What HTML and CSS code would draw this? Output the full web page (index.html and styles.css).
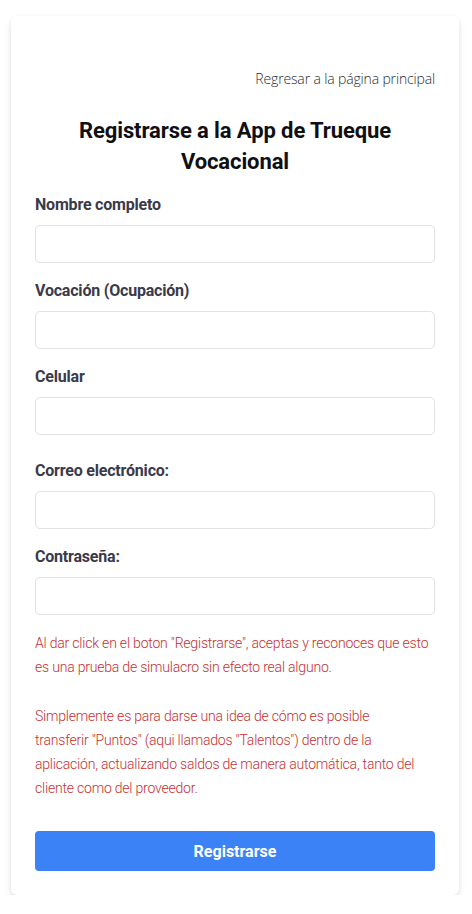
FILE: index.html
```html
<!DOCTYPE html>
<html lang="es">
<head>
<meta charset="utf-8">
<title>Registrarse</title>
<link rel="stylesheet" href="styles.css">
</head>
<body>
<main class="card">
  <div class="back-row">
    <a class="back-link" href="#">Regresar a la página principal</a>
  </div>
  <h1 class="title">Registrarse a la App de Trueque Vocacional</h1>
  <form class="form">
    <div class="field">
      <label class="label">Nombre completo</label>
      <input class="input" type="text">
    </div>
    <div class="field">
      <label class="label">Vocación (Ocupación)</label>
      <input class="input" type="text">
    </div>
    <div class="field">
      <label class="label">Celular</label>
      <input class="input" type="text">
    </div>
    <div class="field field-spaced">
      <label class="label">Correo electrónico:</label>
      <input class="input" type="email">
    </div>
    <div class="field">
      <label class="label">Contraseña:</label>
      <input class="input" type="password">
    </div>
    <div class="notice">
      <p>Al dar click en el boton "Registrarse", aceptas y reconoces que esto es una prueba de simulacro sin efecto real alguno.</p>
      <p>Simplemente es para darse una idea de cómo es posible<br>transferir "Puntos" (aqui llamados "Talentos") dentro de la aplicación, actualizando saldos de manera automática, tanto del<br>cliente como del proveedor.</p>
    </div>
    <button class="button" type="button">Registrarse</button>
  </form>
</main>
</body>
</html>
```
FILE: styles.css
```css
* { box-sizing: border-box; }
html, body { margin: 0; padding: 0; background: #fff; }
body {
  font-family: Roboto, "Liberation Sans", sans-serif;
  color: #1f2937;
}
.card {
  width: 448px;
  margin: 16px 0 0 11px;
  padding: 24px 24px 24px;
  background: #fff;
  border-radius: 6px;
  box-shadow: 0 4px 8px -1px rgba(0,0,0,0.12), 0 1px 4px rgba(0,0,0,0.05);
}
.back-row {
  display: flex;
  justify-content: flex-end;
  margin-top: 27px;
}
.back-link {
  font-family: "Open Sans", sans-serif;
  font-weight: 300;
  font-size: 14px;
  line-height: 24px;
  letter-spacing: -0.15px;
  color: #2d2d2d;
  text-decoration: none;
}
.title {
  margin: 24px 30px 18px;
  text-align: center;
  font-size: 22px;
  line-height: 31px;
  font-weight: 700;
  color: #0f0f14;
  letter-spacing: -0.1px;
}
.form { display: flex; flex-direction: column; }
.field { display: flex; flex-direction: column; margin-bottom: 18px; }
.field-spaced { margin-top: 8px; }
.label {
  font-size: 16px;
  line-height: 20px;
  font-weight: 700;
  color: #3a3a4a;
  margin-bottom: 10px;
  letter-spacing: -0.2px;
}
.input {
  height: 38px;
  border: 1px solid #e2e2e6;
  border-radius: 5px;
  padding: 0 12px;
  font: inherit;
  background: #fff;
}
.notice {
  margin-top: -2px;
  color: #c53030;
  font-size: 14px;
  line-height: 24px;
  font-weight: 300;
  letter-spacing: -0.2px;
}
.notice p { margin: 0 0 25px; }
.notice p:last-child { margin-bottom: 31px; }
.button {
  height: 40px;
  border: 0;
  border-radius: 4px;
  background: #3b82f6;
  color: #fff;
  font-family: inherit;
  font-size: 16px;
  font-weight: 700;
  cursor: pointer;
}
```
